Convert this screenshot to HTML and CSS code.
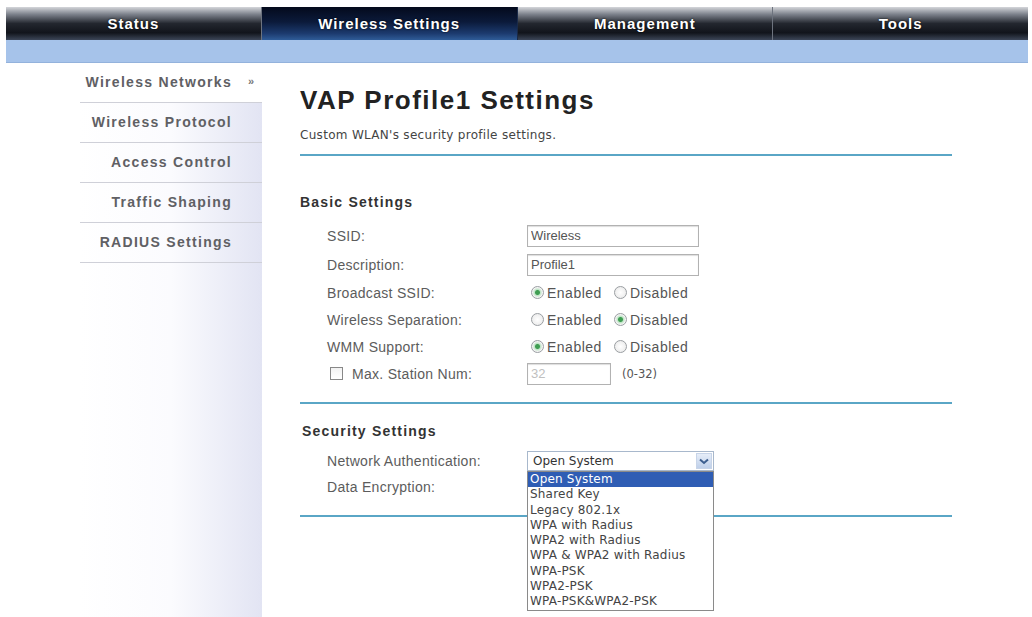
FILE: index.html
```html
<!DOCTYPE html>
<html>
<head lang="en">
    <meta charset="UTF-8">
    <link rel="stylesheet" href="styles.css">
    <title>VAP Profile1 Settings</title>
</head>
<body>
<div class="header">
    <div class="topnav">
        <a class="tab">Status</a>
        <a class="tab active">Wireless Settings</a>
        <a class="tab">Management</a>
        <a class="tab">Tools</a>
    </div>
    <div class="subbar"></div>
</div>

<div class="layout">
    <div class="sidebar">
        <a class="menuItem current">Wireless Networks<span class="arrow">&raquo;</span></a>
        <a class="menuItem">Wireless Protocol</a>
        <a class="menuItem">Access Control</a>
        <a class="menuItem">Traffic Shaping</a>
        <a class="menuItem">RADIUS Settings</a>
    </div>

    <div class="main">
        <h1>VAP Profile1 Settings</h1>
        <p class="intro">Custom WLAN's security profile settings.</p>

        <div class="section">
            <h2>Basic Settings</h2>
            <div class="row tall">
                <label class="lbl">SSID:</label>
                <input class="field" type="text" value="Wireless">
            </div>
            <div class="row tall">
                <label class="lbl">Description:</label>
                <input class="field" type="text" value="Profile1">
            </div>
            <div class="row">
                <label class="lbl">Broadcast SSID:</label>
                <span class="opt"><input class="radio" type="radio" name="bc" checked>Enabled</span>
                <span class="opt"><input class="radio" type="radio" name="bc">Disabled</span>
            </div>
            <div class="row">
                <label class="lbl">Wireless Separation:</label>
                <span class="opt"><input class="radio" type="radio" name="ws">Enabled</span>
                <span class="opt"><input class="radio" type="radio" name="ws" checked>Disabled</span>
            </div>
            <div class="row">
                <label class="lbl">WMM Support:</label>
                <span class="opt"><input class="radio" type="radio" name="wmm" checked>Enabled</span>
                <span class="opt"><input class="radio" type="radio" name="wmm">Disabled</span>
            </div>
            <div class="row">
                <label class="lbl"><input class="check" type="checkbox">Max. Station Num:</label>
                <input class="field small" type="text" value="32" disabled>
                <span class="range">(0-32)</span>
            </div>
        </div>

        <div class="section">
            <h2>Security Settings</h2>
            <div class="row">
                <label class="lbl">Network Authentication:</label>
                <div class="select">
                    <span class="selValue">Open System</span>
                    <span class="selBtn">
                        <svg width="10" height="7" viewBox="0 0 10 7"><path d="M1 1.5 L5 5 L9 1.5" fill="none" stroke="#3d5f8f" stroke-width="2"/></svg>
                    </span>
                    <ul class="dropList">
                        <li class="hl">Open System</li>
                        <li>Shared Key</li>
                        <li>Legacy 802.1x</li>
                        <li>WPA with Radius</li>
                        <li>WPA2 with Radius</li>
                        <li>WPA &amp; WPA2 with Radius</li>
                        <li>WPA-PSK</li>
                        <li>WPA2-PSK</li>
                        <li>WPA-PSK&amp;WPA2-PSK</li>
                    </ul>
                </div>
            </div>
            <div class="row">
                <label class="lbl">Data Encryption:</label>
            </div>
        </div>
        <div class="endLine"></div>
    </div>
</div>
</body>
</html>
```

FILE: styles.css
```css
body {
    margin: 0;
    font-family: "Liberation Sans", Arial, sans-serif;
    background: #fff;
    color: #555;
}
.header {
    margin: 7px 4px 0 6px;
}
.topnav {
    display: flex;
    height: 33px;
}
.tab {
    flex: 1;
    text-align: center;
    line-height: 33px;
    color: #fff;
    font-weight: bold;
    font-size: 15px;
    letter-spacing: 1px;
    text-shadow: 0 0 2px #000;
    background: linear-gradient(#d4d6da 0%, #7d828c 22%, #23272f 50%, #11141b 78%, #3c4658 100%);
    border-right: 1px solid #6d737e;
    cursor: pointer;
}
.tab:last-child {
    border-right: none;
}
.tab.active {
    background: linear-gradient(#040a1c 0%, #0b1a3a 45%, #1c3a6e 80%, #2f5c98 100%);
    border-right: 1px solid #1a2a48;
}
.subbar {
    height: 22px;
    background: #a6c3ea;
    border-bottom: 1px solid #93b2dc;
}
.layout {
    display: flex;
    min-height: calc(100vh - 63px);
}
.sidebar {
    width: 182px;
    margin-left: 80px;
    background: linear-gradient(to right, #fff 0%, #fbfbfe 50%, #e2e4f3 100%);
}
.menuItem {
    display: block;
    position: relative;
    height: 39px;
    line-height: 39px;
    border-bottom: 1px solid #cfd0d8;
    text-align: right;
    padding-right: 30px;
    font-weight: bold;
    font-size: 14px;
    letter-spacing: 1.3px;
    color: #606064;
    cursor: pointer;
}
.menuItem.current {
    background: #fff;
}
.arrow {
    position: absolute;
    right: 8px;
    top: -1px;
    font-size: 11px;
    letter-spacing: 0;
    color: #777;
}
.main {
    width: 652px;
    padding: 22px 0 0 38px;
}
h1 {
    margin: 0;
    font-size: 26px;
    line-height: 30px;
    letter-spacing: 1.5px;
    color: #222;
}
.intro {
    margin: 13px 0 0 0;
    font-family: "DejaVu Sans", sans-serif;
    font-size: 12px;
    letter-spacing: 0.3px;
    line-height: 14px;
    color: #444;
}
.section {
    border-top: 2px solid #5aa6c6;
    margin-top: 12px;
    padding-bottom: 15px;
}
.section + .section {
    margin-top: 0;
}
h2 {
    margin: 37px 0 10px 0;
    font-size: 14px;
    line-height: 18px;
    letter-spacing: 1.2px;
    color: #333;
}
.section + .section h2 {
    margin: 18px 0 8px 2px;
}
.row {
    display: flex;
    align-items: center;
    height: 27px;
    padding-left: 27px;
    font-size: 14px;
    letter-spacing: 0.3px;
}
.row.tall {
    height: 29px;
}
.section + .section .row {
    height: 26px;
}
.lbl {
    width: 200px;
    display: flex;
    align-items: center;
    color: #5c5c5c;
}
.field {
    width: 164px;
    height: 16px;
    padding: 2px 3px;
    border: 1px solid #b2b2b2;
    box-shadow: inset 0 1px 1px #ddd;
    font-family: "Liberation Sans", Arial, sans-serif;
    font-size: 13px;
    color: #555;
    margin: 0;
}
.field.small {
    width: 76px;
    color: #c0c0c0;
    background: #fff;
}
.range {
    margin-left: 11px;
    font-family: "DejaVu Sans", sans-serif;
    font-size: 11.5px;
    letter-spacing: 0;
    color: #555;
}
.opt {
    display: flex;
    align-items: center;
    margin-right: 12px;
    letter-spacing: 0.5px;
    color: #555;
}
.opt:first-of-type {
    margin-left: 4px;
}
.radio {
    -webkit-appearance: none;
    appearance: none;
    width: 13px;
    height: 13px;
    margin: 0 3px 0 0;
    border: 1px solid #9a9ea2;
    border-radius: 50%;
    background: radial-gradient(circle, #fff 0%, #e6e6e6 100%);
}
.radio:checked {
    background: radial-gradient(circle, #3f9d52 0, #3f9d52 2px, #bfe4c6 3px, #f4f4f4 5px);
}
.check {
    -webkit-appearance: none;
    appearance: none;
    width: 13px;
    height: 13px;
    margin: 0 9px 0 3px;
    border: 1px solid #888;
    background: linear-gradient(#f2f2f2, #fff);
}
.select {
    position: relative;
    width: 185px;
    height: 18px;
    border: 1px solid #a8b8cc;
    display: flex;
    align-items: center;
    background: #fff;
    letter-spacing: 0;
}
.selValue {
    flex: 1;
    padding-left: 5px;
    font-family: "DejaVu Sans", sans-serif;
    font-size: 12px;
    color: #333;
}
.selBtn {
    width: 16px;
    height: 16px;
    margin-right: 1px;
    display: flex;
    align-items: center;
    justify-content: center;
    background: linear-gradient(#e6edf8, #bfd0ea);
    border: 1px solid #c7d4e8;
    box-sizing: border-box;
}
.dropList {
    position: absolute;
    top: 19px;
    left: -1px;
    width: 185px;
    margin: 0;
    padding: 0;
    list-style: none;
    background: #fff;
    border: 1px solid #8a8a8a;
    z-index: 2;
}
.dropList li {
    height: 15.3px;
    line-height: 15px;
    padding-left: 2px;
    font-family: "DejaVu Sans", sans-serif;
    font-size: 12px;
    letter-spacing: 0.2px;
    color: #444;
    white-space: nowrap;
}
.dropList li.hl {
    background: #2f5db4;
    color: #fff;
}
.endLine {
    border-top: 2px solid #5aa6c6;
}
```
